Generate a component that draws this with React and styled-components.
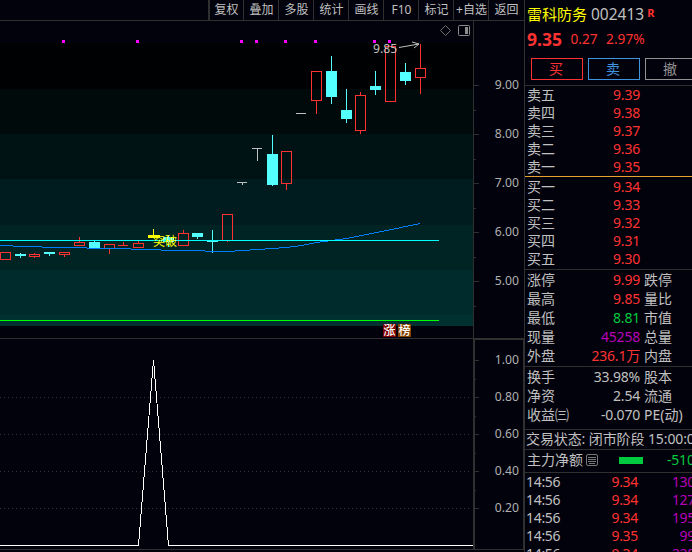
import React from 'react';
import styled, { createGlobalStyle } from 'styled-components';

const RED = '#ff3232';
const CYAN = '#54ffff';
const GRAY = '#c0c0c0';
const LINE = '#303030';
const GREEN = '#00ca3e';
const PURPLE = '#b800b8';
const FONT = '"Noto Sans", "Noto Sans CJK SC", sans-serif';

const GlobalStyle = createGlobalStyle`
  * { box-sizing: border-box; }
  body { margin: 0; background: #02020c; overflow: hidden; }
`;

const Terminal = styled.div`
  display: grid;
  grid-template-columns: 524px 168px;
  width: 692px;
  height: 552px;
  overflow: hidden;
  background: #02020c;
  color: ${GRAY};
  font: 14px/18px ${FONT};
  white-space: nowrap;
`;

const ChartArea = styled.main`
  display: flex;
  flex-direction: column;
  min-width: 0;
`;

const Toolbar = styled.nav`
  display: flex;
  justify-content: flex-end;
  flex: none;
  height: 21px;
  border-bottom: 1px solid ${LINE};
`;

const ToolButton = styled.button`
  width: ${(p) => (p.$last ? 36 : 35)}px;
  height: 20px;
  padding: 0 0 1px ${(p) => (p.$last ? 0 : 1)}px;
  border: 0;
  border-left: 1px solid ${LINE};
  box-shadow: ${(p) => (p.$first ? `inset 1px 0 ${LINE}` : 'none')};
  background: none;
  color: ${GRAY};
  font: 12px/18px ${FONT};
  white-space: nowrap;
`;

const Pane = styled.section`
  display: grid;
  grid-template-columns: 473px 51px;
  flex: none;
  height: ${(p) => p.$height}px;
`;

const Drawing = styled.svg`
  display: block;
  font-family: ${FONT};
  shape-rendering: crispEdges;
`;

const Sidebar = styled.aside`
  border-left: 1px solid ${LINE};
  width: 168px;
  overflow: hidden;
`;

const Block = styled.section`
  height: ${(p) => p.$height}px;
  padding-top: ${(p) => p.$top || 0}px;
  border-bottom: 1px solid ${(p) => p.$line || LINE};
  overflow: hidden;
`;

const Title = styled.header`
  display: flex;
  height: 26px;
  padding: 3px 0 0 2px;
  line-height: 22px;
`;

const StockName = styled.span`
  width: 64px;
  color: #ffff00;
  font-size: 15px;
`;

const Code = styled.span`
  font-size: 15.5px;
`;

const Flag = styled.span`
  margin-left: 3px;
  color: ${RED};
  font: bold 11px/20px ${FONT};
`;

const Quote = styled.div`
  display: flex;
  align-items: center;
  gap: 8.5px;
  height: 26px;
  padding-left: 2px;
  color: ${RED};
  font-size: 13.7px;
`;

const LastPrice = styled.strong`
  font-size: 17.5px;
`;

const Actions = styled.div`
  display: flex;
  gap: 5px;
  padding: 6px 0 0 6px;
`;

const ActionButton = styled.button`
  flex: none;
  width: 52px;
  height: 22px;
  padding: 0 2px 1px 0;
  border: 1px solid ${(p) => p.$tone};
  background: transparent;
  color: ${(p) => p.$tone};
  font: 14px/18px ${FONT};
`;

const QuoteRow = styled.div`
  display: grid;
  grid-template-columns: 43px 70px 1fr;
  height: ${(p) => p.$height}px;
  padding-left: 2px;
  line-height: ${(p) => p.$height}px;
`;

const Value = styled.span`
  justify-self: end;
  color: ${(p) => p.$tone || GRAY};
  letter-spacing: ${(p) => p.$tight || 0}px;
`;

const SecondLabel = styled.span`
  padding-left: 4px;
`;

const Status = styled.div`
  padding-left: 1px;
  font-size: 14px;
  letter-spacing: -0.1px;
`;

const FlowRow = styled.div`
  display: flex;
  align-items: center;
  height: 20px;
  padding-left: 2px;
`;

const FlowBar = styled.span`
  flex: none;
  width: 24px;
  height: 7px;
  margin: 0 24px 0 21px;
  background: ${GREEN};
`;

const FlowValue = styled.span`
  flex: none;
  color: ${GREEN};
  letter-spacing: -0.2px;
`;

const NoteIcon = styled.svg`
  flex: none;
  margin-left: 3px;
`;

const TradeRow = styled.div`
  display: grid;
  grid-template-columns: 52px 60px 57px;
  height: 18px;
  padding-left: 1px;
  letter-spacing: -0.3px;
`;

const TradeCell = styled.span`
  color: ${(p) => p.$tone || GRAY};
  text-align: ${(p) => (p.$right ? 'right' : 'left')};
`;

const bands = [
  [21, 43, '#02020c'], [43, 89, '#000102'], [89, 134, '#000a0b'],
  [134, 179, '#001314'], [179, 225, '#001c1e'], [225, 270, '#002324'],
  [270, 315, '#002b2c'], [315, 326, '#003030'],
];

// [left, wick x, top, body top, body bottom, bottom, kind]
const candles = [
  [0, 5, 252, 252, 260, 260, 'up'], [15, 20, 253, 254, 256, 258, 'down'],
  [29, 34, 253, 254, 257, 258, 'up'], [44, 49, 252, 252, 254, 256, 'down'],
  [59, 64, 252, 252, 255, 257, 'up'], [74, 79, 237, 242, 246, 246, 'up'],
  [89, 94, 240, 242, 248, 248, 'down'], [104, 109, 244, 244, 249, 254, 'up'],
  [118, 123, 242, 245, 246, 246, 'up'], [133, 138, 241, 243, 248, 248, 'up'],
  [148, 153, 229, 235, 238, 238, 'signal'], [163, 168, 235, 237, 242, 247, 'down'],
  [178, 183, 230, 233, 246, 246, 'up'], [192, 197, 233, 233, 237, 239, 'down'],
  [207, 212, 230, 241, 242, 253, 'down'], [222, 227, 214, 214, 241, 242, 'up'],
  [237, 242, 182, 182, 183, 185, 'flat'], [252, 257, 148, 148, 149, 161, 'flat'],
  [267, 272, 135, 154, 185, 186, 'down'], [281, 286, 151, 151, 184, 190, 'up'],
  [296, 301, 113, 113, 114, 114, 'flat'], [311, 316, 71, 71, 101, 114, 'up'],
  [326, 331, 56, 71, 97, 104, 'down'], [341, 346, 89, 110, 119, 123, 'down'],
  [355, 360, 92, 95, 131, 134, 'up'], [370, 375, 71, 86, 90, 95, 'down'],
  [385, 390, 46, 46, 102, 102, 'up'], [400, 405, 63, 72, 81, 85, 'down'],
  [415, 420, 44, 68, 78, 94, 'up'],
];
const kindColor = { up: RED, down: CYAN, flat: GRAY, signal: '#ffff00' };

function Candle({ data: [x, wick, top, open, close, bottom, kind] }) {
  const color = kindColor[kind];
  const thin = close - open <= 1;
  const hollow = kind === 'up' && !thin;
  const width = kind === 'signal' ? 12 : thin && kind !== 'down' ? 10 : 11;
  return (
    <g fill={color}>
      {hollow ? (
        <rect x={x + 0.5} y={open + 0.5} width="10" height={close - open - 1} fill="none" stroke={color} />
      ) : (
        <rect x={x} y={open} width={width} height={close - open} />
      )}
      <rect x={wick} y={top} width="1" height={open - top} />
      <rect x={wick} y={close} width="1" height={bottom - close} />
    </g>
  );
}

function Axis({ height, y0, labels, gap, first, minorFirst, boxed }) {
  return (
    <Drawing width="51" height={height} viewBox={`473 ${y0} 51 ${height}`}>
      <rect x="473" y={y0} width={boxed ? 2 : 1} height={boxed ? 212 : height} fill={LINE} />
      {boxed && <path d="M523.5 338V550M473 549.5H524" stroke={LINE} fill="none" />}
      {boxed && <rect x="473" y="338" width="51" height="2" fill={LINE} />}
      {labels.map((label, i) => (
        <g key={label}>
          <rect x="474" y={first + i * gap} width="5" height="1" fill={LINE} />
          {(!boxed || i < 4) && <rect x="474" y={minorFirst + i * gap} width="2" height="1" fill={LINE} />}
          <text x="519" y={first + i * gap + 4} textAnchor="end" fontSize="12.2" fill="#b0b0b0">{label}</text>
        </g>
      ))}
    </Drawing>
  );
}

function PriceChart() {
  return (
    <Drawing width="473" height="317" viewBox="0 21 473 317">
      {bands.map(([a, b, color]) => (
        <rect key={a} x="0" y={a} width="473" height={b - a} fill={color} />
      ))}
      {[62, 136, 240, 255, 284, 314, 373, 388].map((x) => (
        <rect key={x} x={x} y="40" width="3" height="3" fill="#ff00ff" />
      ))}
      {candles.map((c) => <Candle key={c[0]} data={c} />)}
      <path
        d="M0 245.5H13M13 246.5H42M42 247.5H87M87 248.5H131M131 249.5H161M161 250.5H205M205 251.5H235M235 250.5H250M250 249.5H265M265 248.5H279M279 247.5H290M290 246.5H298M298 245.5H304M304 244.5H309M309 243.5H314M314 242.5H320M320 241.5H328M328 240.5H335M335 239.5H343M343 238.5H349M349 237.5H354M354 236.5H359M359 235.5H364M364 234.5H369M369 233.5H374M374 232.5H379M379 231.5H384M384 230.5H389M389 229.5H394M394 228.5H399M399 227.5H403M403 226.5H408M408 225.5H413M413 224.5H418M418 223.5H420"
        stroke="#0080ff" fill="none"
      />
      <rect x="0" y="240" width="439" height="1" fill="#00ffff" />
      <rect x="0" y="320" width="439" height="1" fill="#00ff00" />
      <text x="153" y="245.5" fontSize="12" fill="#ffff00">突破</text>
      <text x="373" y="53" fontSize="12.2" fill={GRAY}>9.85</text>
      <path d="M399 47.5L419 44M412 42L419 44L414 48" stroke={GRAY} fill="none" shapeRendering="auto" />
      <path d="M445.5 25.5L450.5 30.5L445.5 35.5L440.5 30.5Z" stroke="#707070" fill="none" shapeRendering="auto" />
      <rect x="458.5" y="25.5" width="11" height="10" rx="1" stroke="#8c8c8c" fill="none" shapeRendering="auto" />
      <rect x="465" y="27" width="3" height="7" fill="#8c8c8c" />
      <rect x="383" y="324" width="13" height="13" rx="1" fill="#800000" />
      <rect x="398" y="324" width="13" height="13" rx="1" fill="#864200" />
      <text x="383.5" y="335" fontSize="12" fontWeight="500" fill="#fff">涨</text>
      <text x="398.5" y="335" fontSize="12" fontWeight="500" fill="#fff">榜</text>
    </Drawing>
  );
}

function SignalChart() {
  return (
    <Drawing width="473" height="214" viewBox="0 338 473 214">
      <path d="M0 338.5H473M0 549.5H473" stroke={LINE} />
      {[397, 434, 471, 508].map((y) => (
        <path key={y} d={`M0 ${y}.5H472`} stroke="#343438" strokeDasharray="1 3" />
      ))}
      <path d="M0 545.5H138.5L153.5 360L168.5 545.5H473" stroke="#fff" fill="none" />
    </Drawing>
  );
}

const tools = ['复权', '叠加', '多股', '统计', '画线', 'F10', '标记', '+自选', '返回'];
const sells = [['卖五', '9.39'], ['卖四', '9.38'], ['卖三', '9.37'], ['卖二', '9.36'], ['卖一', '9.35']];
const buys = [['买一', '9.34'], ['买二', '9.33'], ['买三', '9.32'], ['买四', '9.31'], ['买五', '9.30']];
const stats = [
  ['涨停', '9.99', '跌停', RED], ['最高', '9.85', '量比', RED], ['最低', '8.81', '市值', GREEN],
  ['现量', '45258', '总量', PURPLE], ['外盘', '236.1万', '内盘', RED],
];
const ratios = [['换手', '33.98%', '股本'], ['净资', '2.54', '流通'], ['收益㈢', '-0.070', 'PE(动)']];
const trades = [['9.34', '130'], ['9.34', '127'], ['9.34', '195'], ['9.35', '99'], ['9.34', '228']];

function Rows({ items, height }) {
  return items.map(([label, value, second, tone]) => (
    <QuoteRow key={label} $height={height}>
      <span>{label}</span>
      <Value $tone={second ? tone : RED} $tight={-0.2}>{value}</Value>
      {second && <SecondLabel>{second}</SecondLabel>}
    </QuoteRow>
  ));
}

export default function App() {
  return (
    <Terminal>
      <GlobalStyle />
      <ChartArea>
        <Toolbar>
          {tools.map((tool, i) => (
            <ToolButton key={tool} $first={i === 0} $last={i === 8}>{tool}</ToolButton>
          ))}
        </Toolbar>
        <Pane $height={317}>
          <PriceChart />
          <Axis height={317} y0={21} first={85} minorFirst={110} gap={49} labels={['9.00', '8.00', '7.00', '6.00', '5.00']} />
        </Pane>
        <Pane $height={214}>
          <SignalChart />
          <Axis boxed height={214} y0={338} first={360} minorFirst={379} gap={37} labels={['1.00', '0.80', '0.60', '0.40', '0.20']} />
        </Pane>
      </ChartArea>
      <Sidebar>
        <Block $height={86}>
          <Title>
            <StockName>雷科防务</StockName>
            <Code>002413</Code>
            <Flag>R</Flag>
          </Title>
          <Quote>
            <LastPrice>9.35</LastPrice>
            <span>0.27</span>
            <span>2.97%</span>
          </Quote>
          <Actions>
            <ActionButton $tone={RED}>买</ActionButton>
            <ActionButton $tone="#3f95e0">卖</ActionButton>
            <ActionButton $tone="#929292">撤</ActionButton>
          </Actions>
        </Block>
        <Block $height={91} $line="#e8a030"><Rows items={sells} height={18} /></Block>
        <Block $height={93} $top={1}><Rows items={buys} height={18} /></Block>
        <Block $height={97}><Rows items={stats} height={19} /></Block>
        <Block $height={63}><Rows items={ratios} height={19} /></Block>
        <Block $height={20}><Status>交易状态: 闭市阶段 15:00:00</Status></Block>
        <Block $height={23}>
          <FlowRow>
            <span>主力净额</span>
            <NoteIcon width="12" height="12" viewBox="0 0 12 12" fill="none" stroke="#777">
              <rect x="0.5" y="0.5" width="11" height="11" rx="1.5" />
              <path d="M2 3.5H10M2 5.5H10M2 7.5H10M3 9.5H9" />
            </NoteIcon>
            <FlowBar />
            <FlowValue>-510</FlowValue>
          </FlowRow>
        </Block>
        {trades.map(([price, volume], i) => (
          <TradeRow key={i}>
            <TradeCell>14:56</TradeCell>
            <TradeCell $right $tone={RED}>{price}</TradeCell>
            <TradeCell $right $tone={PURPLE}>{volume}</TradeCell>
          </TradeRow>
        ))}
      </Sidebar>
    </Terminal>
  );
}
